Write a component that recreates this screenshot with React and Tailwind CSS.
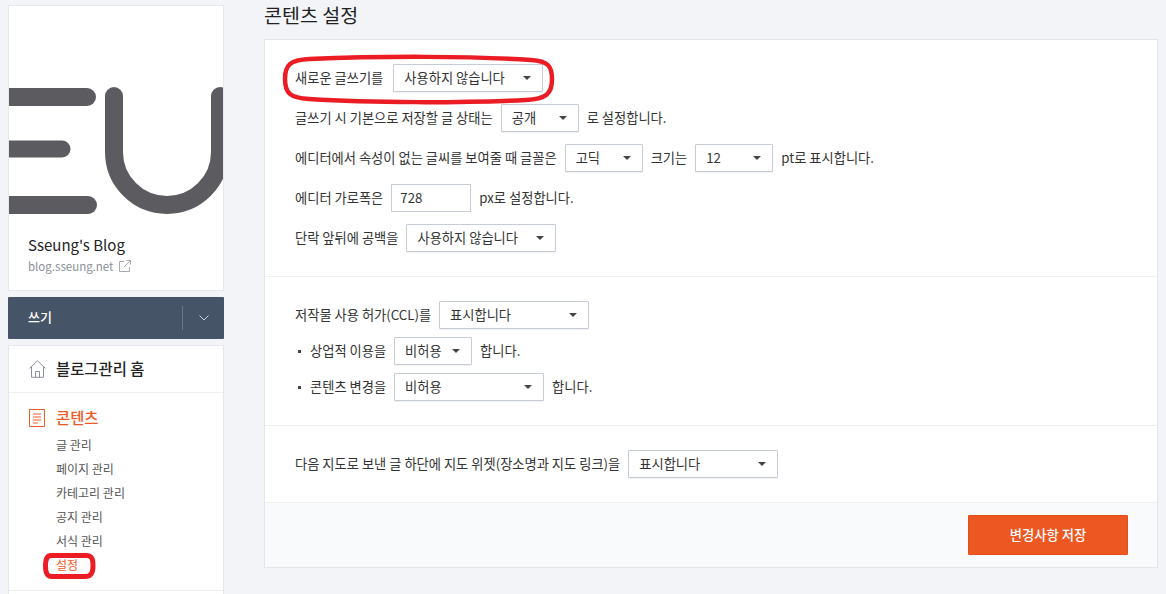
import React from 'react';

const FONT = 'font-["Noto_Sans_CJK_KR","Noto_Sans",sans-serif]';

const Select = ({ value, width }) => (
    <div className={`${width} h-7 flex items-center justify-between pl-[10px] pr-[11px] bg-white border border-[#c5ccd6] rounded-[1px] shadow-[0_1px_1px_rgba(0,0,0,0.06)] text-[13.25px] text-[#333]`}>
        <span>{value}</span>
        <span className="w-0 h-0 border-x-[4px] border-x-transparent border-t-[4px] border-t-[#444]"></span>
    </div>
);

const Row = ({ children, className = '' }) => (
    <div className={`flex items-center h-7 text-[13.25px] text-[#333] ${className}`}>{children}</div>
);

const Bullet = () => <span className="w-[3px] h-[3px] bg-[#444] ml-[3px] mr-[9px]"></span>;

const subMenus = ['글 관리', '페이지 관리', '카테고리 관리', '공지 관리', '서식 관리', '설정'];

const App = () => {
    return (
        <div className={`relative flex w-[1166px] h-[594px] overflow-hidden bg-[#f3f4f7] ${FONT}`}>
            {/* sidebar */}
            <aside className="w-[216px] ml-2 pt-[5px] shrink-0">
                <div className="h-[286px] bg-white border border-[#e6e8ef]">
                    <svg width="214" height="214" viewBox="0 0 214 214" className="block">
                        <defs>
                            <filter id="soft"><feGaussianBlur stdDeviation="0.7" /></filter>
                        </defs>
                        <g fill="none" stroke="#5b5b61" strokeWidth="18" strokeLinecap="round" filter="url(#soft)">
                            <path d="M-10 91H78" />
                            <path d="M-10 143H53" strokeWidth="17" />
                            <path d="M-10 199H79" />
                            <path d="M105 90V146A53 53 0 0 0 211 146V90" />
                        </g>
                    </svg>
                    <div className="pl-[19px] pt-[13px]">
                        <div className="text-[15px] leading-[24px] text-[#222]">Sseung's Blog</div>
                        <div className="flex items-center gap-[6px] text-[11.5px] leading-[18px] text-[#8a8f99]">
                            <span>blog.sseung.net</span>
                            <svg width="12" height="12" viewBox="0 0 12 12" fill="none" stroke="#a4a9b2" strokeWidth="1">
                                <path d="M5 1.500H.5V11.500H10.500V7" />
                                <path d="M5 7L11.500.5M7.500.5H11.500V4.500" />
                            </svg>
                        </div>
                    </div>
                </div>
                <div className="flex items-center h-[42px] mt-[6px] bg-[#465467] rounded-[1px] text-white">
                    <span className="flex-1 pl-5 pb-[2px] text-[13px] font-medium">쓰기</span>
                    <span className="w-px h-6 bg-[#6b7888]"></span>
                    <span className="w-[41px] flex justify-center">
                        <svg width="10" height="6" viewBox="0 0 10 6" fill="none" stroke="#cdd3da" strokeWidth="1"><path d="M.5.5L5 5L9.500.5" /></svg>
                    </span>
                </div>
                <div className="mt-[6px] bg-white border border-[#e6e8ef] h-[300px]">
                    <div className="flex items-center h-[47px] pl-5 border-b border-[#eef0f4]">
                        <svg width="17" height="18" viewBox="0 0 17 18" fill="none" stroke="#8a909c" strokeWidth="1" className="mr-[10px]">
                            <path d="M.5 8.500L8.500.8L16.500 8.500" />
                            <path d="M2.500 7V17.300H14.500V7" />
                            <path d="M6.500 17.300V11.500H10.500V17.300" />
                        </svg>
                        <span className="text-[15.4px] font-medium text-[#222]">블로그관리 홈</span>
                    </div>
                    <div className="h-[198px] pt-[16px] border-b border-[#eef0f4]">
                        <div className="flex items-center h-[18px] pl-5">
                            <svg width="16" height="18" viewBox="0 0 16 18" fill="none" stroke="#ee5a24" strokeWidth="1" className="mr-[11px]">
                                <path d="M.5.5H15.500V17.500H.5Z" />
                                <path d="M4 5H12M4 8H12M4 11H12M4 14H9" />
                            </svg>
                            <span className="text-[15.4px] font-medium text-[#ee5a24]">콘텐츠</span>
                        </div>
                        <ul className="mt-[6px] pl-[47px]">
                            {subMenus.map((item) => (
                                <li key={item} className={`h-6 leading-6 text-[12px] ${item === '설정' ? 'text-[#ee5a24]' : 'text-[#555]'}`}>
                                    {item}
                                </li>
                            ))}
                        </ul>
                    </div>
                </div>
            </aside>

            {/* content */}
            <main className="w-[894px] ml-10 shrink-0">
                <h2 className="h-[39px] text-[19.5px] leading-[30px] text-[#222]">콘텐츠 설정</h2>
                <div className="bg-white border border-[#e3e5ec]">
                    <section className="flex flex-col gap-3 pl-[30px] py-6 border-b border-[#eef0f4]">
                        <Row>
                            <span className="mr-[10px]">새로운 글쓰기를</span>
                            <Select value="사용하지 않습니다" width="w-[150px]" />
                        </Row>
                        <Row>
                            <span className="mr-2">글쓰기 시 기본으로 저장할 글 상태는</span>
                            <Select value="공개" width="w-[78px]" />
                            <span className="ml-2">로 설정합니다.</span>
                        </Row>
                        <Row>
                            <span className="mr-2">에디터에서 속성이 없는 글씨를 보여줄 때 글꼴은</span>
                            <Select value="고딕" width="w-[78px]" />
                            <span className="mx-2">크기는</span>
                            <Select value="12" width="w-[78px]" />
                            <span className="ml-2">pt로 표시합니다.</span>
                        </Row>
                        <Row>
                            <span className="mr-2">에디터 가로폭은</span>
                            <div className="w-[80px] h-7 flex items-center pl-2 border border-[#c5ccd6]">728</div>
                            <span className="ml-2">px로 설정합니다.</span>
                        </Row>
                        <Row>
                            <span className="mr-2">단락 앞뒤에 공백을</span>
                            <Select value="사용하지 않습니다" width="w-[150px]" />
                        </Row>
                    </section>
                    <section className="flex flex-col gap-2 pl-[30px] py-6 border-b border-[#eef0f4]">
                        <Row>
                            <span className="mr-2">저작물 사용 허가(CCL)를</span>
                            <Select value="표시합니다" width="w-[150px]" />
                        </Row>
                        <Row>
                            <Bullet />
                            <span className="mr-2">상업적 이용을</span>
                            <Select value="비허용" width="w-[78px]" />
                            <span className="ml-2">합니다.</span>
                        </Row>
                        <Row>
                            <Bullet />
                            <span className="mr-2">콘텐츠 변경을</span>
                            <Select value="비허용" width="w-[150px]" />
                            <span className="ml-2">합니다.</span>
                        </Row>
                    </section>
                    <section className="pl-[30px] py-6 border-b border-[#eef0f4]">
                        <Row>
                            <span className="mr-2">다음 지도로 보낸 글 하단에 지도 위젯(장소명과 지도 링크)을</span>
                            <Select value="표시합니다" width="w-[150px]" />
                        </Row>
                    </section>
                    <div className="flex justify-end items-center h-[64px] pr-[29px] bg-[#f9fafc]">
                        <button className="w-40 h-10 bg-[#ec5722] border border-[#de4f1c] rounded-[1px] text-[13.33px] font-medium text-white">
                            변경사항 저장
                        </button>
                    </div>
                </div>
            </main>

            {/* red marker annotations */}
            <svg width="274" height="52" viewBox="0 0 274 52" fill="none" stroke="#ec1c24" strokeWidth="4.500" className="absolute left-[281px] top-[53px]">
                <path d="M28 6C100 3 190 3 250 7C267 8 271 13 271 26C271 41 265 46 245 47C180 50 90 50 28 46C9 45 4 40 4 26C4 12 9 7 28 6Z" />
            </svg>
            <svg width="54" height="28" viewBox="0 0 54 28" fill="none" stroke="#ec1c24" strokeWidth="5" className="absolute left-[42px] top-[552px]">
                <path d="M9 3.500H44C50 3.500 51 7 51 14C51 21 49 24.500 43 24.500H10C5 24.500 3.500 21 3.500 14C3.500 7 5 3.500 9 3.500Z" />
            </svg>
        </div>
    );
};

export default App;
